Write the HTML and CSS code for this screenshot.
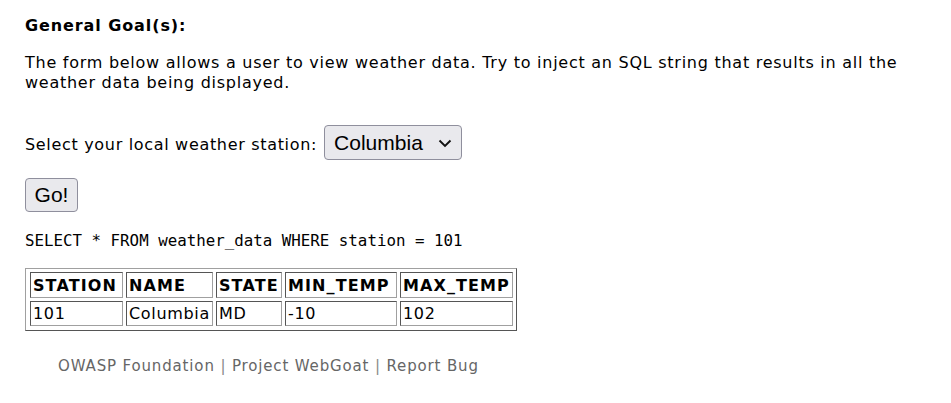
FILE: index.html
```html
<!DOCTYPE html>
<html>
<head>
<meta charset="utf-8">
<link rel="stylesheet" href="styles.css">
</head>
<body>
<div class="page">
  <div class="goal-title">General Goal(s):</div>
  <p class="goal-text">The form below allows a user to view weather data. Try to inject an SQL string that results in all the weather data being displayed.</p>
  <form class="form">
    <div class="row">
      <span class="label">Select your local weather station:</span>
      <div class="select"><span>Columbia</span><svg class="chev" width="14" height="9" viewBox="0 0 14 9"><path d="M1.5 1.5 L7 7 L12.5 1.5" fill="none" stroke="#111" stroke-width="1.9"/></svg></div>
    </div>
    <button type="button" class="go">Go!</button>
  </form>
  <div class="sql">SELECT * FROM weather_data WHERE station = 101</div>
  <table class="data">
    <tr><th class="c1">STATION</th><th class="c2">NAME</th><th class="c3">STATE</th><th class="c4">MIN_TEMP</th><th class="c5">MAX_TEMP</th></tr>
    <tr><td>101</td><td>Columbia</td><td>MD</td><td>-10</td><td>102</td></tr>
  </table>
  <div class="footer">OWASP Foundation <span class="sep">|</span> Project WebGoat <span class="sep">|</span> Report Bug</div>
</div>
</body>
</html>
```
FILE: styles.css
```css
html, body { margin: 0; padding: 0; background: #fff; }
body { font-family: "DejaVu Sans", Verdana, sans-serif; color: #000; }
.page { padding: 17px 25px 0 25px; }
.goal-title { font-weight: bold; font-size: 16px; line-height: 18px; letter-spacing: 0.9px; }
.goal-text { margin: 18px 0 0 0; font-size: 16px; line-height: 20px; letter-spacing: 0.74px; }
.form { margin-top: 32px; }
.row { display: flex; align-items: center; gap: 7px; }
.label { font-size: 16px; letter-spacing: 0.68px; padding-top: 3px; }
.select {
  display: flex; align-items: center; justify-content: space-between;
  border: 1px solid #8f8f9d; border-radius: 4px; background: #e9e9ed;
  font-family: "Liberation Sans", Arial, sans-serif; font-size: 21px;
  padding: 0 9px 0 9px; box-sizing: border-box; width: 138px; height: 35px;
}
.chev { margin-top: 1px; }
.go {
  margin-top: 18px; display: block;
  width: 53px; height: 34px;
  border: 1px solid #8f8f9d; border-radius: 4px; background: #e9e9ed;
  font-family: "Liberation Sans", Arial, sans-serif; font-size: 21px; color: #000;
  padding: 0;
}
.sql { margin-top: 20px; font-family: "DejaVu Sans Mono", monospace; font-size: 15.8px; line-height: 18px; }
.data {
  margin-top: 18px; border: 1px solid; border-spacing: 3px;
  border-color: #a0a0a0 #555 #555 #a0a0a0;
  padding: 0 0 1px 1px;
  font-size: 16px;
}
.data th, .data td {
  border: 1px solid; padding: 1px 2px; text-align: left; height: 21px;
  border-color: #555 #a0a0a0 #a0a0a0 #555;
  letter-spacing: 0.68px;
}
.data th { font-weight: bold; letter-spacing: 1.1px; height: 22px; }
.data .c1 { width: 87px; }
.data .c2 { width: 81px; }
.data .c3 { width: 60px; }
.data .c4 { width: 106px; }
.data .c5 { width: 107px; }
.footer { margin: 26px 0 0 33px; color: #666; font-size: 15px; letter-spacing: 0.85px; }
.sep { color: #888; }
```
